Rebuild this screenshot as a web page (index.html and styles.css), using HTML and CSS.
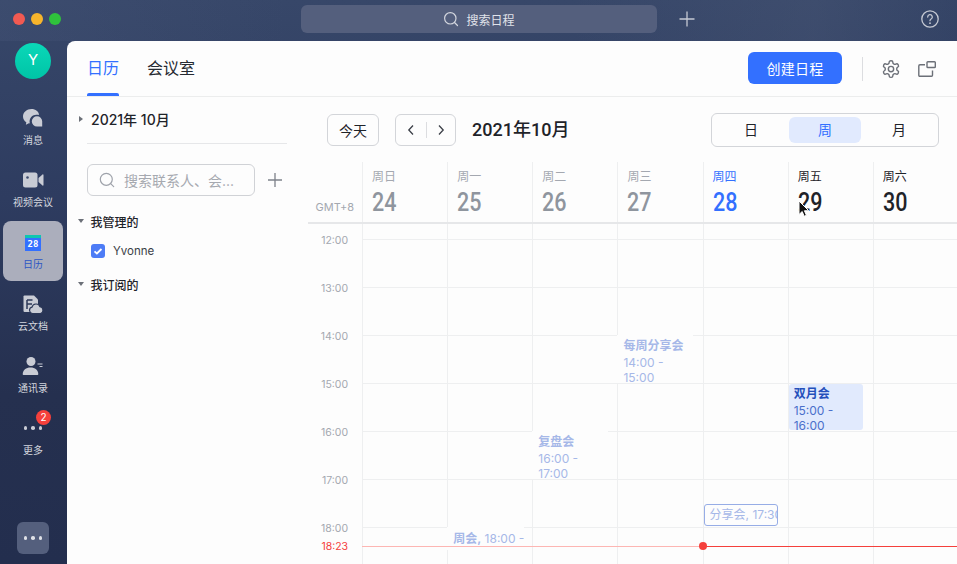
FILE: index.html
```html
<!DOCTYPE html>
<html lang="zh">
<head>
<meta charset="utf-8">
<title>日历</title>
<link rel="stylesheet" href="styles.css">
</head>
<body>
<div class="app">
  <header class="titlebar">
    <div class="lights"><i class="light red"></i><i class="light yellow"></i><i class="light green"></i></div>
    <div class="global-search">
      <svg class="ic16" viewBox="0 0 16 16" fill="none" stroke="#d3d6de" stroke-width="1.2"><circle cx="7.3" cy="7.3" r="5.7"/><path d="M11.5 11.5l3 3" stroke-linecap="round"/></svg>
      <span>搜索日程</span>
    </div>
    <svg class="title-plus" viewBox="0 0 16 16" fill="none" stroke="#c5c9d3" stroke-width="1.3"><path d="M8 .5v15M.5 8h15"/></svg>
    <svg class="title-help" viewBox="0 0 18 18" fill="none" stroke="#c5c9d3" stroke-width="1.3"><circle cx="9" cy="9" r="8.2"/><path d="M6.7 7a2.3 2.3 0 1 1 3.4 2c-.8.5-1.1.9-1.1 1.7" stroke-linecap="round"/><circle cx="9" cy="13.2" r=".9" fill="#c5c9d3" stroke="none"/></svg>
  </header>
  <div class="workspace">
    <nav class="sidebar">
      <div class="avatar">Y</div>
      <ul class="nav-list">
        <li class="nav-item">
          <svg class="nav-icon" viewBox="0 0 22 20"><path fill="#c9ccd5" d="M9.5 1C4.8 1 1 4.3 1 8.4c0 2.4 1.3 4.5 3.3 5.9l-.4 2.5 3-1.5c.3.1.7.1 1 .2a6.6 6.6 0 0 1 7-8.7c.8 0 1.6.1 2.2.3C16.8 3.4 13.5 1 9.500 1z"/><path fill="#c9ccd5" d="M15 8.200a5.200 5.200 0 0 0-5.200 5.100 5.200 5.200 0 0 0 5.200 5.200h5.200v-5.200A5.200 5.200 0 0 0 15 8.200z"/></svg>
          <span>消息</span>
        </li>
        <li class="nav-item">
          <svg class="nav-icon" viewBox="0 0 22 20"><rect x="1" y="2.500" width="14.500" height="15" rx="2.500" fill="#c9ccd5"/><path fill="#c9ccd5" d="M16.500 8l4-3.500c.5-.4 1-.1 1 .5v10c0 .6-.5.900-1 .5l-4-3.500z"/><circle cx="5.500" cy="7.500" r="1.300" fill="#3c4a6c"/></svg>
          <span>视频会议</span>
        </li>
        <li class="nav-item active">
          <div class="cal-icon"><b>28</b></div>
          <span>日历</span>
        </li>
        <li class="nav-item">
          <svg class="nav-icon" viewBox="0 0 22 20"><path fill="#c9ccd5" d="M2.500 1.500H12l4 4v12.500H2.500A1.200 1.200 0 0 1 1.500 17V2.500a1.200 1.200 0 0 1 1-1z"/><path fill="none" stroke="#2c3858" stroke-width="1.500" d="M5 6h5.500M5 10h5M5 6v9"/><path fill="#c9ccd5" stroke="#2c3858" stroke-width="1.200" d="M10.500 19.500a3.200 3.200 0 0 1-.5-6.300 4.200 4.200 0 0 1 8-.5 3.500 3.500 0 0 1 .5 6.800z"/></svg>
          <span>云文档</span>
        </li>
        <li class="nav-item">
          <svg class="nav-icon" viewBox="0 0 22 20"><circle cx="9" cy="5.500" r="4.500" fill="#c9ccd5"/><path fill="#c9ccd5" d="M1.500 19c-.5 0-.8-.3-.8-.8 0-4 3.400-6.700 7.800-6.700 4.500 0 7.800 2.700 7.800 6.700 0 .5-.3.800-.8.800z"/><path stroke="#c9ccd5" stroke-width="1.200" d="M15.500 8h5M17.500 10.500h3"/></svg>
          <span>通讯录</span>
        </li>
        <li class="nav-item">
          <div class="dots"><i></i><i></i><i></i></div>
          <span>更多</span>
          <em class="badge">2</em>
        </li>
      </ul>
      <button class="more-btn"><span class="dots"><i></i><i></i><i></i></span></button>
    </nav>
    <main class="panel">
      <div class="panel-head">
        <div class="tabs">
          <span class="tab current">日历</span>
          <span class="tab">会议室</span>
        </div>
        <div class="head-actions">
          <button class="create">创建日程</button>
          <i class="vsep"></i>
          <svg class="gear" viewBox="0 0 24 24" fill="none" stroke="#6c7078" stroke-width="1.700"><path d="M12.220 2h-.44a2 2 0 0 0-2 2v.18a2 2 0 0 1-1 1.730l-.43.25a2 2 0 0 1-2 0l-.15-.08a2 2 0 0 0-2.730.73l-.22.38a2 2 0 0 0 .73 2.730l.15.1a2 2 0 0 1 1 1.720v.51a2 2 0 0 1-1 1.740l-.15.09a2 2 0 0 0-.73 2.730l.22.38a2 2 0 0 0 2.730.73l.15-.08a2 2 0 0 1 2 0l.43.25a2 2 0 0 1 1 1.730V20a2 2 0 0 0 2 2h.44a2 2 0 0 0 2-2v-.18a2 2 0 0 1 1-1.730l.43-.25a2 2 0 0 1 2 0l.15.08a2 2 0 0 0 2.730-.73l.22-.39a2 2 0 0 0-.73-2.730l-.15-.08a2 2 0 0 1-1-1.740v-.5a2 2 0 0 1 1-1.740l.15-.09a2 2 0 0 0 .73-2.730l-.22-.38a2 2 0 0 0-2.730-.73l-.15.08a2 2 0 0 1-2 0l-.43-.25a2 2 0 0 1-1-1.730V4a2 2 0 0 0-2-2z"/><circle cx="12" cy="12" r="3.200"/></svg>
          <svg class="popout" viewBox="0 0 18 16" fill="none" stroke="#6c7078" stroke-width="1.400"><path d="M7 3.700H2a1.200 1.200 0 0 0-1.200 1.200v9.400A1 1 0 0 0 2 15.300h11.500a1 1 0 0 0 1-1V9.500"/><rect x="9" y=".8" width="8.300" height="5.700" rx=".8"/></svg>
        </div>
      </div>
      <div class="content">
        <aside class="left">
          <div class="month-row"><i class="tri right"></i><strong>2021年 10月</strong></div>
          <div class="left-rule"></div>
          <div class="contact-row">
            <div class="contact-search">
              <svg class="ic16" viewBox="0 0 16 16" fill="none" stroke="#9fa3ab" stroke-width="1.200"><circle cx="7.300" cy="7.300" r="6"/><path d="M11.700 11.700l3 3" stroke-linecap="round"/></svg>
              <span>搜索联系人、会...</span>
            </div>
            <svg class="add" viewBox="0 0 14 14" fill="none" stroke="#7e828a" stroke-width="1.300"><path d="M7 0v14M0 7h14"/></svg>
          </div>
          <div class="group"><i class="tri down"></i><span>我管理的</span></div>
          <div class="person">
            <span class="check"><svg viewBox="0 0 14 14" fill="none" stroke="#fff" stroke-width="1.800"><path d="M3.500 7.300l2.400 2.200 4.600-4.500"/></svg></span>
            <span>Yvonne</span>
          </div>
          <div class="group tight"><i class="tri down"></i><span>我订阅的</span></div>
        </aside>
        <section class="calendar">
          <div class="toolbar">
            <button class="today">今天</button>
            <div class="pager">
              <svg viewBox="0 0 8 12" fill="none" stroke="#3b3f47" stroke-width="1.300"><path d="M6 1.500L1.800 6 6 10.500"/></svg>
              <i></i>
              <svg viewBox="0 0 8 12" fill="none" stroke="#3b3f47" stroke-width="1.300"><path d="M2 1.500L6.200 6 2 10.500"/></svg>
            </div>
            <h1 class="cal-title">2021年10月</h1>
            <div class="switch">
              <span>日</span>
              <span class="on">周</span>
              <span>月</span>
            </div>
          </div>
          <div class="week-head">
            <div class="gmt">GMT+8</div>
            <div class="day past"><small>周日</small><b>24</b></div>
            <div class="day past"><small>周一</small><b>25</b></div>
            <div class="day past"><small>周二</small><b>26</b></div>
            <div class="day past"><small>周三</small><b>27</b></div>
            <div class="day now"><small>周四</small><b>28</b></div>
            <div class="day"><small>周五</small><b>29</b></div>
            <div class="day"><small>周六</small><b>30</b></div>
          </div>
          <div class="week-body">
            <div class="hours">
              <span>12:00</span><span>13:00</span><span>14:00</span><span>15:00</span><span>16:00</span><span>17:00</span><span>18:00</span>
              <span class="now-label">18:23</span>
            </div>
            <div class="cols">
              <div class="col"></div>
              <div class="col">
                <div class="event fading e-weekly"><b>周会,</b> 18:00 -</div>
              </div>
              <div class="col">
                <div class="event fading e-review"><b>复盘会</b><p>16:00 - 17:00</p></div>
              </div>
              <div class="col">
                <div class="event fading e-share"><b>每周分享会</b><p>14:00 - 15:00</p></div>
              </div>
              <div class="col">
                <div class="event e-talk"><b>分享会,</b> 17:30 - 18:00</div>
              </div>
              <div class="col">
                <div class="event e-bimonth"><b>双月会</b><p>15:00 - 16:00</p></div>
              </div>
              <div class="col"></div>
              <div class="now-past"></div>
              <div class="now-future"></div>
              <div class="now-dot"></div>
            </div>
          </div>
        </section>
      </div>
    </main>
  </div>
  <svg class="cursor" viewBox="0 0 12 18"><path d="M1 1v13.500l3.200-3 2 4.800 2.200-1-2-4.600h4.300z" fill="#111" stroke="#fff" stroke-width="1"/></svg>
</div>
</body>
</html>
```

FILE: styles.css
```css
* { box-sizing: border-box; }
html, body { margin: 0; padding: 0; height: 100%; overflow: hidden; }
body { font-family: Inter, "Noto Sans CJK SC", sans-serif; color: #1f2329; }
button { font: inherit; cursor: default; }
ul { list-style: none; margin: 0; padding: 0; }

.app {
  position: relative;
  width: 957px;
  height: 564px;
  display: flex;
  flex-direction: column;
  overflow: hidden;
  background:
    linear-gradient(90deg, rgba(70, 85, 120, .35) 0, rgba(37, 50, 84, 0) 30%, rgba(37, 50, 84, 0) 60%, rgba(75, 88, 118, .35) 85%, rgba(37, 50, 84, .1) 100%) top / 100% 41px no-repeat,
    linear-gradient(180deg, #374769 0, #2e3c60 35%, #25304f 70%, #232e4e 100%);
}

.titlebar { position: relative; height: 41px; flex: none; display: flex; justify-content: center; }
.lights { position: absolute; left: 13px; top: 13px; display: flex; gap: 6px; }
.light { width: 12px; height: 12px; border-radius: 50%; }
.red { background: #f25a52; }
.yellow { background: #f7b52c; }
.green { background: #2fc23c; }
.global-search {
  position: absolute;
  left: 301px;
  top: 5px;
  width: 356px;
  height: 28px;
  border-radius: 6px;
  background: #545f7d;
  display: flex;
  align-items: center;
  justify-content: center;
  gap: 7px;
  font-size: 12px;
  color: #e0e3ea;
}
.ic16 { width: 16px; height: 16px; flex: none; }
.title-plus { position: absolute; left: 679px; top: 11px; width: 16px; height: 16px; }
.title-help { position: absolute; left: 921px; top: 10px; width: 18px; height: 18px; }

.workspace { flex: 1; display: flex; min-height: 0; }

.sidebar { width: 67px; flex: none; display: flex; flex-direction: column; align-items: center; padding: 2px 1px 0 0; }
.avatar {
  width: 36px;
  height: 36px;
  border-radius: 50%;
  background: linear-gradient(180deg, #0ad8b8, #00c4a6);
  color: #fff;
  font-size: 15px;
  display: flex;
  align-items: center;
  justify-content: center;
  padding-bottom: 3px;
}
.nav-list { margin-top: 18px; display: flex; flex-direction: column; gap: 2px; width: 60px; }
.nav-item {
  position: relative;
  height: 60px;
  display: flex;
  flex-direction: column;
  align-items: center;
  justify-content: flex-end;
  padding-bottom: 10px;
  font-size: 10px;
  line-height: 14px;
  color: #d3d6de;
}
.nav-icon { width: 22px; height: 20px; margin-bottom: 5px; }
.nav-item.active { background: #abaebc; border-radius: 8px; color: #2b55c4; }
.cal-icon {
  width: 16px;
  height: 16px;
  margin-bottom: 6px;
  background: #3370ff;
  border-top: 3px solid #0ec6b0;
  color: #fff;
  display: flex;
  align-items: center;
  justify-content: center;
}
.cal-icon b { font-size: 9px; line-height: 13px; font-family: "DejaVu Sans Mono", monospace; }
.dots { display: flex; gap: 4px; align-items: center; justify-content: center; height: 20px; margin-bottom: 5px; }
.dots i { width: 3.500px; height: 3.500px; border-radius: 50%; background: #c9ccd5; }
.badge {
  position: absolute;
  left: 33px;
  top: 3px;
  width: 15px;
  height: 15px;
  border-radius: 50%;
  background: #f5403c;
  color: #fff;
  font-size: 10px;
  font-style: normal;
  line-height: 15px;
  text-align: center;
}
.more-btn {
  margin-top: auto;
  margin-bottom: 10px;
  width: 32px;
  height: 32px;
  border: 0;
  padding: 0;
  border-radius: 6px;
  background: #545f7d;
  display: flex;
  align-items: center;
  justify-content: center;
}
.more-btn .dots { margin: 0; }
.more-btn .dots i { background: #dfe1e7; }

.panel { flex: 1; min-width: 0; background: #fdfdfd; border-top-left-radius: 8px; display: flex; flex-direction: column; }
.panel-head {
  height: 56px;
  flex: none;
  border-bottom: 1px solid #eceded;
  display: flex;
  justify-content: space-between;
  padding-left: 20px;
}
.tabs { display: flex; gap: 28px; }
.tab { position: relative; font-size: 16px; line-height: 55px; height: 55px; color: #262a31; }
.tab.current { color: #3370ff; }
.tab.current::after {
  content: "";
  position: absolute;
  left: 0;
  right: 0;
  bottom: 0;
  height: 3px;
  border-radius: 2px 2px 0 0;
  background: #3370ff;
}
.head-actions { display: flex; align-items: center; padding-right: 21px; }
.create {
  width: 94px;
  height: 32px;
  border: 0;
  border-radius: 6px;
  background: #3370ff;
  color: #fff;
  font-size: 14px;
  letter-spacing: .2px;
  margin-top: -1px;
}
.vsep { width: 1px; height: 24px; background: #dcdde0; margin: 0 18px 0 20px; }
.gear { width: 20px; height: 20px; margin-right: 17px; }
.popout { width: 18px; height: 16px; margin-top: 1px; }

.content { flex: 1; min-height: 0; display: flex; }

.left { width: 241px; flex: none; padding-top: 13px; }
.month-row { display: flex; align-items: center; gap: 8px; padding-left: 12px; height: 18px; font-size: 14px; }
.month-row strong { font-weight: 500; }
.tri { display: block; flex: none; width: 0; height: 0; }
.tri.right { border-left: 4px solid #6c7078; border-top: 3.500px solid transparent; border-bottom: 3.500px solid transparent; }
.tri.down { border-top: 4.500px solid #6c7078; border-left: 3.500px solid transparent; border-right: 3.500px solid transparent; margin-left: -1.500px; }
.left-rule { height: 1px; margin: 15px 21px 0 20px; background: #e6e7e9; }
.contact-row { margin: 20px 0 0 20px; display: flex; align-items: center; }
.contact-search {
  width: 168px;
  height: 32px;
  border: 1px solid #d0d2d6;
  border-radius: 6px;
  display: flex;
  align-items: center;
  gap: 9px;
  padding-left: 11px;
  font-size: 14px;
  color: #a6a9b0;
  white-space: nowrap;
}
.add { width: 14px; height: 14px; margin-left: 13px; }
.group { display: flex; align-items: center; gap: 7px; padding-left: 12px; margin-top: 16px; height: 18px; font-size: 12px; font-weight: 500; }
.group.tight { margin-top: 15px; }
.person { display: flex; align-items: center; gap: 8px; padding-left: 24px; margin-top: 12px; height: 18px; font-size: 11.500px; color: #3b3f47; }
.check { width: 14px; height: 14px; border-radius: 3px; background: #4d7cf6; display: block; }
.check svg { display: block; width: 14px; height: 14px; }

.calendar { flex: 1; min-width: 0; display: flex; flex-direction: column; }
.toolbar { height: 65px; flex: none; padding: 16px 18px 15px 19px; display: flex; align-items: center; }
.today {
  width: 52px;
  height: 32px;
  border: 1px solid #d3d5d9;
  border-radius: 6px;
  background: transparent;
  color: #1f2329;
  font-size: 14px;
  padding: 0;
}
.pager {
  width: 61px;
  height: 32px;
  margin-left: 16px;
  border: 1px solid #d3d5d9;
  border-radius: 6px;
  display: flex;
  align-items: center;
  justify-content: space-between;
  padding: 0 10px 0 11px;
}
.pager svg { width: 8px; height: 12px; }
.pager i { width: 1px; height: 16px; background: #dcdde0; }
.cal-title { margin: 0 0 0 16px; font: 500 18px/24px Roboto, "Noto Sans CJK SC", sans-serif; color: #1f2329; }
.switch {
  margin-left: auto;
  width: 228px;
  height: 34px;
  border: 1px solid #d3d5d9;
  border-radius: 6px;
  display: flex;
  align-items: center;
  justify-content: space-between;
  padding: 0 3px;
  font-size: 14px;
  color: #1f2329;
}
.switch span { width: 72px; height: 26px; line-height: 26px; text-align: center; border-radius: 6px; }
.switch .on { background: #e1eafe; color: #3370ff; }

.week-head { height: 62px; flex: none; display: flex; border-bottom: 2px solid #e6e7e9; }
.gmt { width: 54.100px; flex: none; padding: 38px 8px 0 0; text-align: right; font-size: 11px; line-height: 14px; color: #a4a8b0; }
.day { width: 85.120px; flex: none; border-left: 1px solid #eeeff0; padding: 7px 0 0 9px; color: #1f2329; }
.day small { display: block; font-size: 12px; line-height: 16px; }
.day b {
  display: block;
  font: 500 25px/30px Roboto, sans-serif;
  margin-top: 3px;
  transform: scaleX(.86);
  transform-origin: left center;
}
.day.past { color: #8f959e; }
.day.past small { color: #a4a8b0; }
.day.now { color: #3370ff; }

.week-body { flex: 1; min-height: 0; display: flex; overflow: hidden; }
.hours { position: relative; width: 54.100px; flex: none; padding: 9px 14px 0 0; text-align: right; font-size: 10.500px; color: #a4a8b0; }
.hours span { display: block; height: 48px; line-height: 16px; }
.hours .now-label { position: absolute; right: 14px; top: 315px; height: 16px; color: #f5403c; background: #fdfdfd; }
.cols {
  position: relative;
  flex: 1;
  display: flex;
  background-image: linear-gradient(#eeeff0 1px, transparent 1px);
  background-size: 100% 48px;
  background-position: 0 15px;
}
.col { position: relative; width: 85.120px; flex: none; border-left: 1px solid #eeeff0; }
.event { position: absolute; overflow: hidden; font-size: 12px; line-height: 15px; background: #fdfdfd; }
.event b { font-weight: 700; }
.event p { margin: 2px 0 0; }
.fading { color: #a6b8e8; }
.e-weekly { left: -1px; top: 303px; width: 77px; height: 23px; padding: 4px 0 0 6px; line-height: 16px; white-space: nowrap; }
.e-review { left: -1px; top: 207px; width: 76px; height: 48px; padding: 3px 0 0 6px; }
.e-share { left: -1px; top: 111px; width: 76px; height: 48px; padding: 3px 0 0 6px; }
.e-talk {
  left: 0;
  top: 280px;
  width: 74px;
  height: 22px;
  border: 1px solid #97ade6;
  border-radius: 3px;
  padding: 2px 0 0 5px;
  color: #a6b8e8;
  white-space: nowrap;
}
.e-talk b { font-weight: 400; }
.e-bimonth {
  left: 0;
  top: 160px;
  width: 74px;
  height: 46px;
  border-radius: 3px;
  background: #e1eafd;
  padding: 2px 0 0 5px;
  color: #4a6fcb;
}
.e-bimonth b { color: #2450bb; }
.now-past { position: absolute; left: 0; top: 322px; width: 341px; height: 1px; background: #fdb6b3; }
.now-future { position: absolute; left: 341px; right: 0; top: 322px; height: 1px; background: #f5403c; }
.now-dot { position: absolute; left: 337px; top: 318px; width: 8px; height: 8px; border-radius: 50%; background: #f5403c; }

.cursor { position: absolute; left: 798px; top: 200px; width: 12px; height: 18px; }
```
